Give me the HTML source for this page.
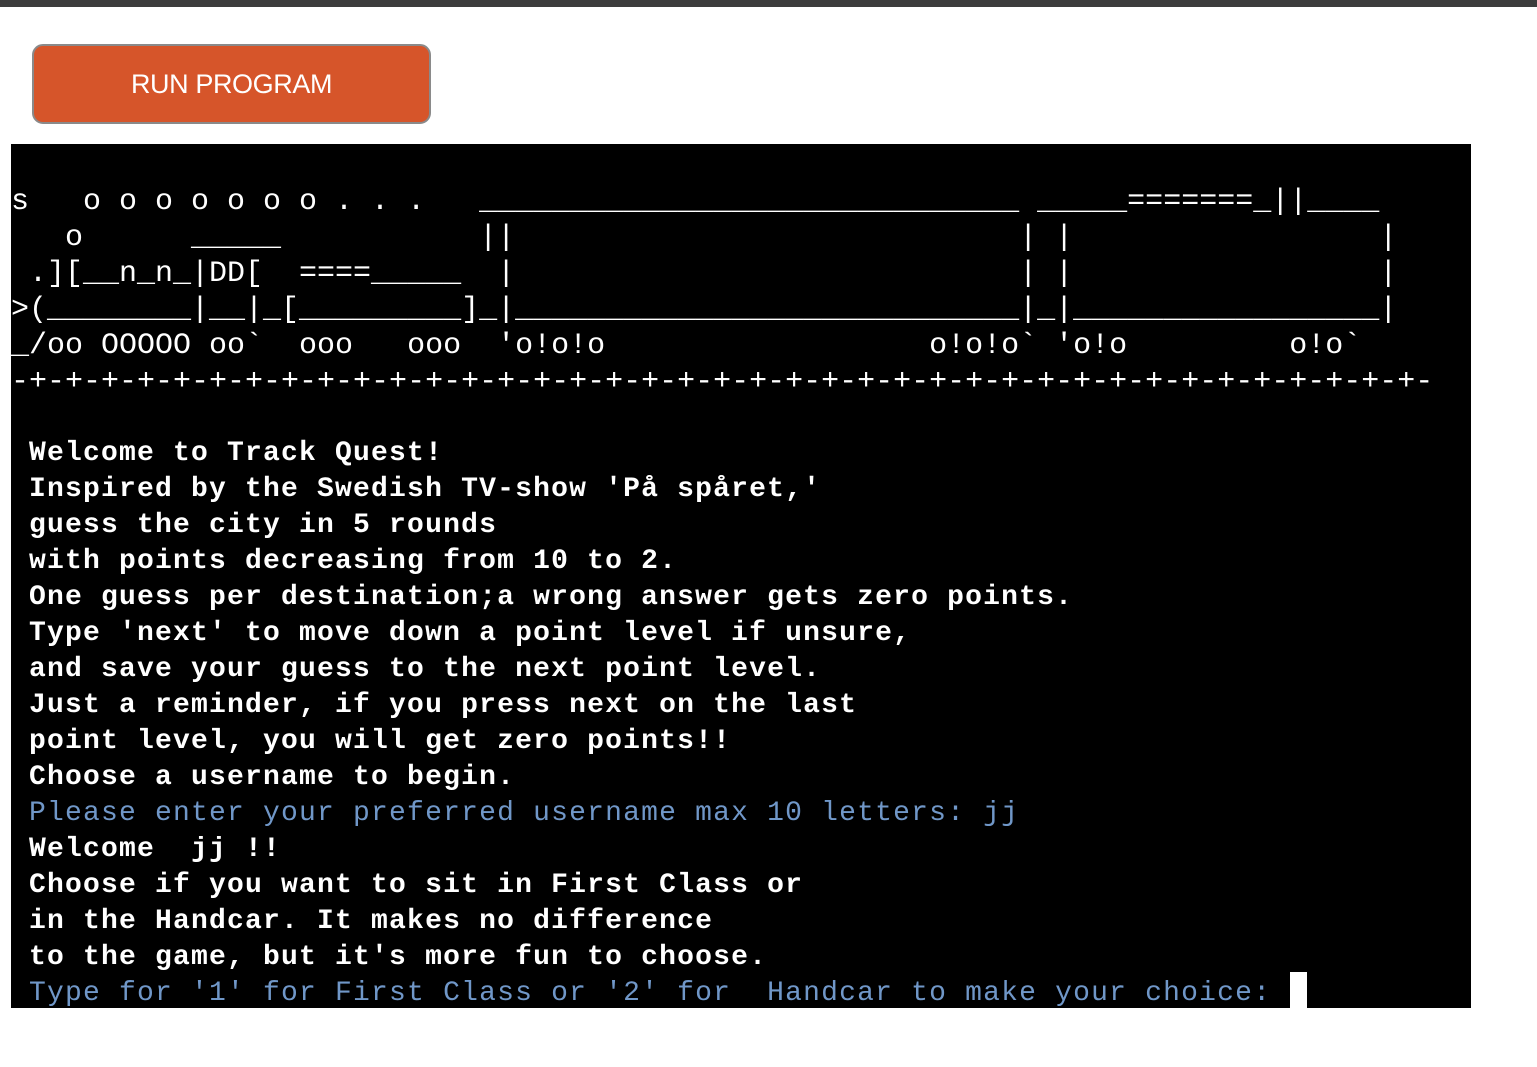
<!DOCTYPE html>
<html>
<head>
<meta charset="utf-8">
<style>
  html,body{margin:0;padding:0;background:#fff;width:1537px;height:1067px;overflow:hidden;position:relative;}
  .topbar{position:absolute;left:0;top:0;width:1537px;height:7px;background:#3c3c3c;}
  .btn{position:absolute;left:32px;top:44px;width:395px;height:76px;background:#d6552a;border:2px solid #8a8a8a;border-radius:11px;
       color:#fff;font-family:"Liberation Sans",Arial,sans-serif;font-size:27px;text-align:center;line-height:76px;letter-spacing:-0.4px;}
  .term{position:absolute;left:11px;top:144px;width:1460px;height:864px;background:#000;}
  pre{position:absolute;left:11px;margin:0;font-family:"Liberation Mono","DejaVu Sans Mono",monospace;
      line-height:36px;color:#fff;white-space:pre;}
  .art{top:184px;font-weight:normal;font-size:30px;letter-spacing:0;}
  .txt{top:436px;font-size:28px;letter-spacing:1.2px;}
  .w{font-weight:bold;}
  .b{color:#7097c8;font-weight:normal;}
  .cursor{position:absolute;left:1290px;top:972px;width:17px;height:36px;background:#fff;}
</style>
</head>
<body>
<div class="topbar"></div>
<div class="btn">RUN PROGRAM</div>
<div class="term"></div>
<pre class="art">s   o o o o o o o . . .   ______________________________ _____=======_||____
   o      _____           ||                            | |                 |
 .][__n_n_|DD[  ====_____  |                            | |                 |
&gt;(________|__|_[_________]_|____________________________|_|_________________|
_/oo OOOOO oo`  ooo   ooo  'o!o!o                  o!o!o` 'o!o         o!o`
-+-+-+-+-+-+-+-+-+-+-+-+-+-+-+-+-+-+-+-+-+-+-+-+-+-+-+-+-+-+-+-+-+-+-+-+-+-+-+-</pre>
<pre class="txt"><span class="w"> Welcome to Track Quest!
 Inspired by the Swedish TV-show 'På spåret,'
 guess the city in 5 rounds
 with points decreasing from 10 to 2.
 One guess per destination;a wrong answer gets zero points.
 Type 'next' to move down a point level if unsure,
 and save your guess to the next point level.
 Just a reminder, if you press next on the last
 point level, you will get zero points!!
 Choose a username to begin.</span>
<span class="b"> Please enter your preferred username max 10 letters: jj</span>
<span class="w"> Welcome  jj !!
 Choose if you want to sit in First Class or
 in the Handcar. It makes no difference
 to the game, but it's more fun to choose.</span>
<span class="b"> Type for '1' for First Class or '2' for  Handcar to make your choice: </span></pre>
<div class="cursor"></div>
</body>
</html>
